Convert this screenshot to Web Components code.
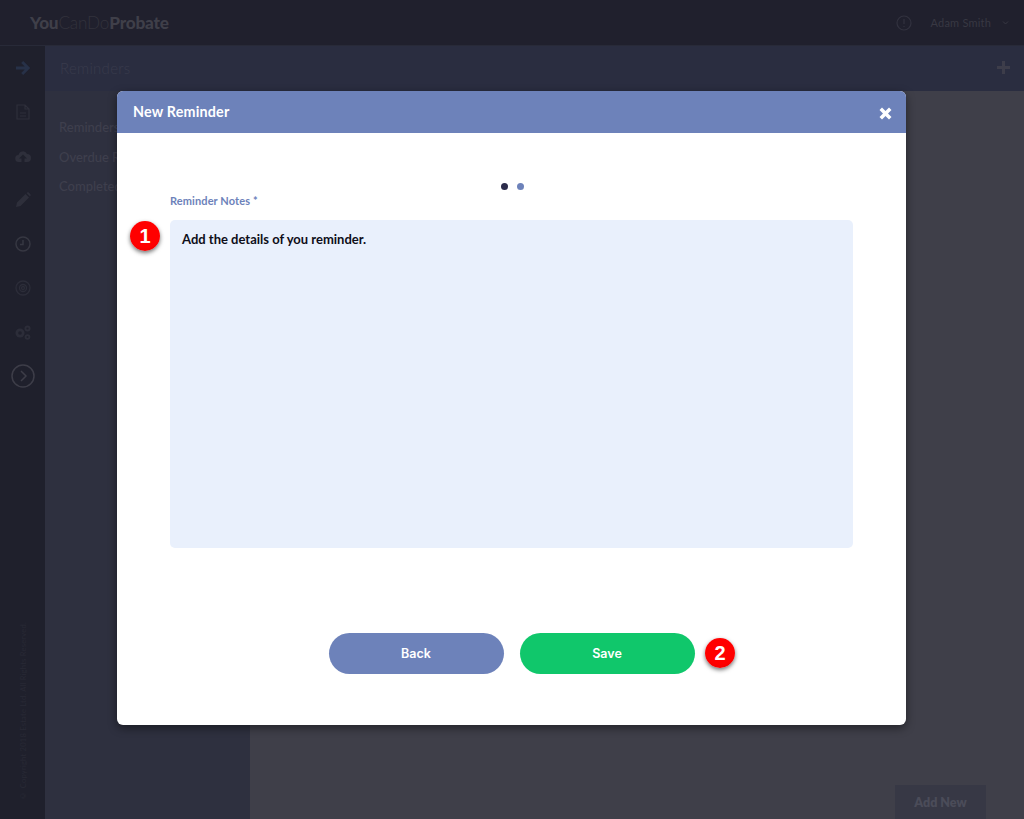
<!DOCTYPE html>
<html lang="en"><head><meta charset="utf-8"><title>New Reminder</title>
<style>
html,body{margin:0;padding:0;width:1024px;height:819px;overflow:hidden;background:#3f3f49;font-family:Lato,"Open Sans",sans-serif}
</style></head><body>
<app-shell></app-shell>
<reminder-modal></reminder-modal>
<script>
const def=(name,html)=>customElements.define(name,class extends HTMLElement{constructor(){super();this.attachShadow({mode:'open'}).innerHTML=html}});
def('top-bar',`<style>
:host{display:flex;align-items:center;height:45px;background:#20202d;border-bottom:1px solid #282a38;padding:0 15px 0 30px;box-sizing:content-box;font-family:Lato,sans-serif}
.logo{font-size:17.2px;letter-spacing:-.2px;color:#3f3f49;flex:1;font-weight:900}
.logo i{font-style:normal;font-weight:300;color:#32323c}
svg{display:block}
.u{font-size:11px;color:#383843;margin:0 11px 0 19px;letter-spacing:.2px;font-weight:400}
</style><div class="logo">You<i>CanDo</i>Probate</div>
<svg width="16" height="16" viewBox="0 0 16 16" fill="none" stroke="#32323f" stroke-width="1.2"><circle cx="8" cy="8" r="7"/><path d="M8 4v5M8 11v1"/></svg>
<span class="u">Adam Smith</span>
<svg width="7" height="6" viewBox="0 0 7 6" fill="none" stroke="#383843"><path d="M1 1.500l2.500 2.500 2.500-2.500"/></svg>`);
def('side-rail',`<style>
:host{display:flex;flex-direction:column;align-items:center;width:45px;flex:none;background:#1f202c;box-sizing:border-box;height:100%;position:relative}
.i{height:44px;display:flex;align-items:center;justify-content:center;width:100%}
svg{display:block}
.copy{flex:1;display:flex;align-items:flex-end;justify-content:center;padding-bottom:18px}
.copy span{writing-mode:vertical-rl;transform:rotate(180deg);font-size:7.6px;color:#282935;white-space:nowrap;letter-spacing:.2px}
</style>
<div class="i"><svg width="16" height="16" viewBox="0 0 16 16" fill="#273148"><path d="M8.200 1l7 7-7 7-2-2 3.500-3.500H1V6.500h8.700L6.200 3z"/></svg></div>
<div class="i"><svg width="14" height="16" viewBox="0 0 14 16" fill="none" stroke="#2e2f3b" stroke-width="1.2"><path d="M1 1h8l4 4v10H1zM9 1v4h4M4 9h6M4 12h6"/></svg></div>
<div class="i"><svg width="16" height="13" viewBox="0 0 16 13" fill="#2e2f3b"><path d="M4 12a3.500 3.500 0 0 1-.5-7A4.500 4.500 0 0 1 12 4a4 4 0 0 1 0 8h-2.500V8.500H12L8 4.500 4 8.500h2.500V12z"/></svg></div>
<div class="i"><svg width="16" height="16" viewBox="0 0 16 16" fill="#2e2f3b"><path d="M1 15l1-4.500L10.500 2l3.500 3.500L5.500 14zM11.500 1l.8-.5c.5-.3 1-.3 1.400.1l1.700 1.700c.4.400.4.900.1 1.400l-.5.800z"/></svg></div>
<div class="i"><svg width="16" height="16" viewBox="0 0 16 16" fill="none" stroke="#363742" stroke-width="1.500"><circle cx="8" cy="8" r="7"/><path d="M8 4v4.500H5"/></svg></div>
<div class="i"><svg width="16" height="16" viewBox="0 0 16 16" fill="none" stroke="#2c2d39" stroke-width="1.300"><circle cx="8" cy="8" r="7"/><circle cx="8" cy="8" r="3.500"/><circle cx="8" cy="8" r="1.500"/></svg></div>
<div class="i"><svg width="16" height="15" viewBox="0 0 16 15" fill="#2c2d39"><circle cx="5" cy="8" r="4.500"/><circle cx="5" cy="8" r="1.800" fill="#1f202c"/><circle cx="12.500" cy="3.500" r="3"/><circle cx="12.500" cy="3.500" r="1.100" fill="#1f202c"/><circle cx="12.500" cy="12" r="2.800"/><circle cx="12.500" cy="12" r="1" fill="#1f202c"/></svg></div>
<div class="i"><svg width="24" height="24" viewBox="0 0 24 24" fill="none" stroke="#3d3d48" stroke-width="1.500"><circle cx="12" cy="12" r="11"/><path d="M10 7l5 5-5 5"/></svg></div>
<div class="copy"><span>© Copyright 2018 Estate Ltd. All Rights Reserved.</span></div>`);
def('sub-bar',`<style>
:host{display:flex;align-items:center;justify-content:space-between;height:43px;flex:none;background:#2a2d40;padding:0 14px 2px 15px;font:300 15px Lato,sans-serif;color:#393b4c;letter-spacing:.3px}
svg{display:block}
</style><span>Reminders</span><svg width="13" height="13" viewBox="0 0 13 13" fill="#3d3d4a"><path d="M5 0h3v5h5v3H8v5H5V8H0V5h5z"/></svg>`);
def('list-panel',`<style>
:host{display:flex;flex-direction:column;gap:11.500px;width:205px;flex:none;background:#2e303f;padding:27px 14px 0;box-sizing:border-box;font:500 13px Lato,sans-serif;color:#3e3f4d}
div{height:18px;line-height:18px;white-space:nowrap}
</style><div>Reminders</div><div>Overdue Reminders</div><div>Completed</div>`);
def('content-pane',`<style>
:host{display:flex;flex:1;align-items:flex-end;justify-content:flex-end;background:#3f3f49;padding:0 38px 0 0}
span{display:block;width:91px;height:34px;text-align:center;background:#30324285;color:#4b4c59;font:800 12.500px/35px Lato,sans-serif}
</style><span>Add New</span>`);
def('app-shell',`<style>
:host{display:flex;flex-direction:column;width:1024px;height:819px}
.row{display:flex;flex:1;min-height:0}.col{display:flex;flex-direction:column;flex:1;min-width:0}.in{display:flex;flex:1;min-height:0}
</style><top-bar></top-bar><div class="row"><side-rail></side-rail><div class="col"><sub-bar></sub-bar><div class="in"><list-panel></list-panel><content-pane></content-pane></div></div></div>`);
def('step-badge',`<style>
:host{position:absolute;display:flex;align-items:center;justify-content:center;width:30px;height:30px;border-radius:50%;background:radial-gradient(circle at 50% 40%,#ff0000 60%,#e60000);box-shadow:0 2px 4px rgba(0,0,0,.55);color:#fff;font:700 20px "Liberation Sans",Arial,sans-serif}
</style><slot></slot>`);
def('pill-button',`<style>
:host{display:flex;align-items:center;justify-content:center;width:175px;height:40px;padding-bottom:1px;border-radius:21px;background:var(--bg);color:#fff;font:600 12.500px Inter,"Noto Sans",sans-serif}
</style><slot></slot>`);
def('reminder-modal',`<style>
:host{position:absolute;left:117px;top:91px;width:789px;height:634px;background:#fff;border-radius:6px;box-shadow:0 3px 10px rgba(0,0,0,.45);display:flex;flex-direction:column;overflow:visible;font-family:Lato,sans-serif}
header{display:flex;align-items:center;justify-content:space-between;height:42px;flex:none;background:#6d82ba;border-radius:6px 6px 0 0;padding:0 14px 1px 16px;box-sizing:border-box;color:#fff;font-size:14.300px;font-weight:700;letter-spacing:.2px}
header svg{display:block;margin-top:3px}
.body{flex:1;display:flex;flex-direction:column;padding:50px 53px 0;position:relative}
.dots{display:flex;justify-content:center;gap:9px;height:8px;padding-left:1px}
.dots i{width:7px;height:7px;border-radius:50%;background:#2b2b4b}
.dots i+i{background:#6d82ba}
label{display:block;margin-top:3px;height:14px;line-height:14px;font-size:11px;font-weight:700;color:#6d82ba;letter-spacing:.1px}
.area{margin-top:12px;height:328px;border-radius:5px;background:#e9f0fc;box-sizing:border-box;padding:11px 12px;font-size:13px;line-height:16px;font-weight:700;color:#0e0e18}
.actions{display:flex;justify-content:center;gap:16px;margin-top:85px;position:relative}
step-badge.a{left:13px;top:88px}
step-badge.b{left:588px;top:505px}
</style>
<header><span>New Reminder</span><svg width="13" height="13" viewBox="0 0 13 13" fill="#fff"><path d="M3 .5L6.500 4 10 .5 12.500 3 9 6.500l3.500 3.500L10 12.500 6.500 9 3 12.500.5 10 4 6.500.5 3z"/></svg></header>
<div class="body">
<div class="dots"><i></i><i></i></div>
<label>Reminder Notes *</label>
<div class="area">Add the details of you reminder.</div>
<div class="actions"><pill-button style="--bg:#6d82ba">Back</pill-button><pill-button style="--bg:#10c76b">Save</pill-button></div>
<step-badge class="a">1</step-badge>
<step-badge class="b">2</step-badge>
</div>`);
</script>
</body></html>
